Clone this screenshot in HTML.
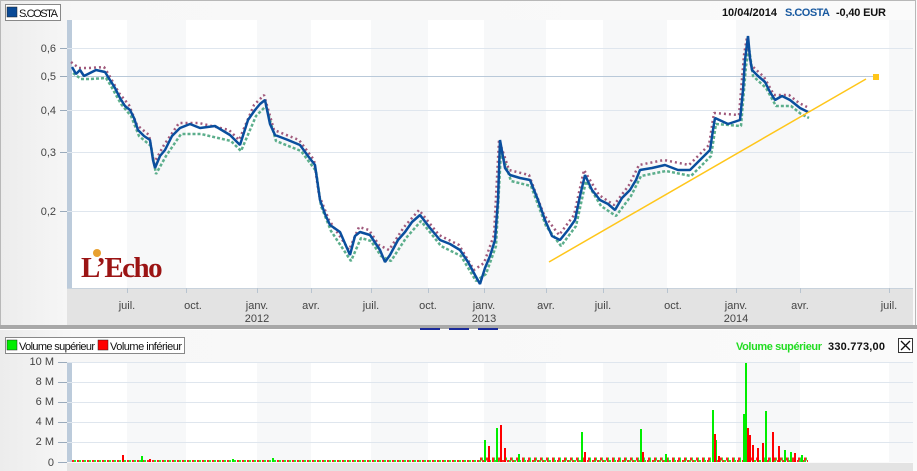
<!DOCTYPE html>
<html><head><meta charset="utf-8"><style>
body{margin:0;width:917px;height:471px;overflow:hidden;background:#fff}
svg{display:block;font-family:"Liberation Sans",sans-serif}
</style></head><body>
<svg width="917" height="471" viewBox="0 0 917 471" xmlns="http://www.w3.org/2000/svg">
<defs>
<linearGradient id="bg" x1="0" y1="0" x2="1" y2="0"><stop offset="0" stop-color="#ececec"/><stop offset="0.08" stop-color="#f7f7f7"/><stop offset="1" stop-color="#fafafa"/></linearGradient>
</defs>
<rect x="0" y="0" width="917" height="326" fill="url(#bg)"/>
<rect x="0.5" y="0.5" width="915" height="325" fill="none" stroke="#b8b8b8"/>
<rect x="71" y="20" width="842" height="268" fill="#fff"/>
<g fill="#f7f8f9">
<rect x="127" y="20" width="59" height="268"/><rect x="257" y="20" width="54" height="268"/>
<rect x="371" y="20" width="57" height="268"/><rect x="484" y="20" width="62" height="268"/>
<rect x="603" y="20" width="64" height="268"/><rect x="736" y="20" width="64" height="268"/>
<rect x="889" y="20" width="24" height="268"/>
</g>
<rect x="67" y="20" width="5" height="268" fill="#bccbdb"/>
<g stroke="#dfe6ee" stroke-width="1">
<line x1="67" y1="48.5" x2="913" y2="48.5"/><line x1="67" y1="110.5" x2="913" y2="110.5"/>
<line x1="67" y1="152.5" x2="913" y2="152.5"/><line x1="67" y1="211.5" x2="913" y2="211.5"/>
</g>
<line x1="67" y1="76.5" x2="876" y2="76.5" stroke="#b9c9d9"/>
<g font-size="11" fill="#444" text-anchor="end">
<text x="56" y="52">0,6</text><text x="56" y="80">0,5</text><text x="56" y="114">0,4</text><text x="56" y="156">0,3</text><text x="56" y="215">0,2</text>
</g>
<g stroke="#9aaabb"><line x1="60" y1="48.5" x2="67" y2="48.5"/><line x1="60" y1="76.5" x2="67" y2="76.5"/><line x1="60" y1="110.5" x2="67" y2="110.5"/><line x1="60" y1="152.5" x2="67" y2="152.5"/><line x1="60" y1="211.5" x2="67" y2="211.5"/></g>
<g fill="none" stroke-linejoin="bevel">
<polyline stroke="#5cae8c" stroke-width="2.5" stroke-dasharray="3 2" transform="translate(1,6)" points="72,67 80,73 90,73 105,72 110,80 120,98 130,110 138,130 150,140 155,168 165,150 180,128 200,128 230,135 240,145 255,110 265,100 275,135 300,145 315,165 320,200 330,225 350,255 360,232 370,235 380,250 390,255 405,232 420,215 440,240 460,250 475,275 485,268 495,240 500,145 510,175 530,180 545,220 560,240 575,220 585,175 600,200 615,210 630,190 640,170 665,165 690,170 710,150 715,118 740,120 745,60 748,42 752,70 765,82 775,100 790,100 800,108 808,112"/>
<polyline stroke="#a05a7c" stroke-width="2.5" stroke-dasharray="2 3" transform="translate(-1,-5)" points="72,67 80,73 90,73 105,72 110,80 120,98 130,110 138,130 150,140 155,168 165,150 180,128 200,128 230,135 240,145 255,110 265,100 275,135 300,145 315,165 320,200 330,225 350,255 360,232 370,235 380,250 390,255 405,232 420,215 440,240 460,250 475,275 485,268 495,240 500,145 510,175 530,180 545,220 560,240 575,220 585,175 600,200 615,210 630,190 640,170 665,165 690,170 710,150 715,118 740,120 745,60 748,42 752,70 765,82 775,100 790,100 800,108 808,112"/>
<polyline stroke="#0a4f9e" stroke-width="2.5" points="72,67 76,74 80,70 84,76 90,73 96,70 105,72 110,80 115,88 120,98 125,106 130,110 134,118 138,130 144,136 150,140 153,160 155,168 160,156 165,150 172,136 180,128 190,124 200,128 215,126 230,135 240,145 248,120 255,110 260,104 265,100 270,124 275,135 288,140 300,145 308,156 315,165 320,200 325,214 330,225 340,232 350,255 355,236 360,232 370,235 380,250 385,262 390,255 398,240 405,232 412,222 420,215 430,228 440,240 450,244 460,250 468,262 475,275 480,284 485,268 490,256 495,240 498,200 500,140 505,168 510,175 520,178 530,180 538,200 545,220 552,236 560,240 568,230 575,220 580,196 585,175 592,190 600,200 608,204 615,210 622,198 630,190 636,180 640,170 652,168 665,165 678,170 690,170 700,160 710,150 713,130 715,118 728,124 740,120 743,90 745,60 748,36 750,58 752,70 758,76 765,82 770,92 775,100 782,96 790,100 795,104 800,108 808,112"/>
</g>
<line x1="549" y1="262" x2="866" y2="79" stroke="#ffc61a" stroke-width="1.5"/>
<rect x="873" y="74" width="6" height="6" fill="#ffc61a"/>
<text x="81" y="277" style="font-family:'Liberation Serif',serif;font-weight:bold;font-size:29px" fill="#9b1414" letter-spacing="-1.5">L’Echo</text>
<circle cx="97" cy="253" r="4" fill="#e8a030"/>
<rect x="67" y="288" width="846" height="37" fill="#e3e3e3"/>
<line x1="67" y1="288.5" x2="913" y2="288.5" stroke="#c8d2dc"/>
<g stroke="#b8c4d0"><line x1="127.5" y1="288" x2="127.5" y2="293"/><line x1="186.5" y1="288" x2="186.5" y2="293"/><line x1="257.5" y1="288" x2="257.5" y2="293"/><line x1="311.5" y1="288" x2="311.5" y2="293"/><line x1="371.5" y1="288" x2="371.5" y2="293"/><line x1="428.5" y1="288" x2="428.5" y2="293"/><line x1="484.5" y1="288" x2="484.5" y2="293"/><line x1="546.5" y1="288" x2="546.5" y2="293"/><line x1="603.5" y1="288" x2="603.5" y2="293"/><line x1="667.5" y1="288" x2="667.5" y2="293"/><line x1="736.5" y1="288" x2="736.5" y2="293"/><line x1="800.5" y1="288" x2="800.5" y2="293"/><line x1="889.5" y1="288" x2="889.5" y2="293"/></g>
<g font-size="11" fill="#444" text-anchor="middle">
<text x="127" y="309">juil.</text><text x="193" y="309">oct.</text><text x="257" y="309">janv.</text><text x="311" y="309">avr.</text><text x="371" y="309">juil.</text><text x="428" y="309">oct.</text><text x="484" y="309">janv.</text><text x="546" y="309">avr.</text><text x="603" y="309">juil.</text><text x="673" y="309">oct.</text><text x="736" y="309">janv.</text><text x="800" y="309">avr.</text><text x="889" y="309">juil.</text>
<text x="257" y="322">2012</text><text x="484" y="322">2013</text><text x="736" y="322">2014</text>
</g>
<rect x="0" y="325" width="917" height="4" fill="#a8a8a8"/>
<g fill="#1a2a9a"><rect x="420" y="328" width="20" height="2"/><rect x="449" y="328" width="20" height="2"/><rect x="478" y="328" width="20" height="2"/></g>
<rect x="5.5" y="4.5" width="55" height="16" fill="#fff" stroke="#888"/>
<rect x="7" y="7" width="10" height="10" fill="#0a4a96" stroke="#222" stroke-width="0.5"/>
<text x="19" y="17" font-size="11" fill="#111" textLength="39">S.COSTA</text>
<text x="777" y="16" font-size="11" font-weight="bold" fill="#111" text-anchor="end">10/04/2014</text>
<text x="785" y="16" font-size="11" font-weight="bold" fill="#1a5aa0" textLength="45">S.COSTA</text>
<text x="836" y="16" font-size="11" font-weight="bold" fill="#111" textLength="50">-0,40 EUR</text>
<rect x="0" y="330" width="917" height="141" fill="url(#bg)"/>
<rect x="71" y="362" width="842" height="100" fill="#fff"/>
<g fill="#f7f8f9">
<rect x="127" y="362" width="59" height="100"/><rect x="257" y="362" width="54" height="100"/>
<rect x="371" y="362" width="57" height="100"/><rect x="484" y="362" width="62" height="100"/>
<rect x="603" y="362" width="64" height="100"/><rect x="736" y="362" width="64" height="100"/>
<rect x="889" y="362" width="24" height="100"/>
</g>
<rect x="67" y="362" width="5" height="100" fill="#bccbdb"/>
<g stroke="#dfe6ee"><line x1="67" y1="362.5" x2="913" y2="362.5"/><line x1="67" y1="382.5" x2="913" y2="382.5"/><line x1="67" y1="402.5" x2="913" y2="402.5"/><line x1="67" y1="422.5" x2="913" y2="422.5"/><line x1="67" y1="442.5" x2="913" y2="442.5"/></g>
<g font-size="11" fill="#444" text-anchor="end">
<text x="54" y="365">10 M</text><text x="54" y="385">8 M</text><text x="54" y="405">6 M</text><text x="54" y="425">4 M</text><text x="54" y="445">2 M</text><text x="54" y="466">0</text>
</g>
<g stroke="#9aaabb"><line x1="58" y1="362.5" x2="67" y2="362.5"/><line x1="58" y1="382.5" x2="67" y2="382.5"/><line x1="58" y1="402.5" x2="67" y2="402.5"/><line x1="58" y1="422.5" x2="67" y2="422.5"/><line x1="58" y1="442.5" x2="67" y2="442.5"/><line x1="58" y1="462.5" x2="67" y2="462.5"/></g>
<line x1="72" y1="461" x2="808" y2="461" stroke="#ff2020" stroke-width="2" stroke-dasharray="3 2"/>
<line x1="74" y1="461" x2="808" y2="461" stroke="#22ee22" stroke-width="2" stroke-dasharray="2 3"/>
<line x1="480" y1="459" x2="808" y2="459" stroke="#ff2020" stroke-width="3" stroke-dasharray="2 4"/>
<line x1="482" y1="459" x2="808" y2="459" stroke="#22ee22" stroke-width="3" stroke-dasharray="1 5"/>
<g fill="#00ee00">
<rect x="141" y="456" width="2" height="6"/><rect x="232" y="459" width="2" height="3"/><rect x="272" y="458" width="2" height="4"/>
<rect x="484" y="440" width="2" height="22"/><rect x="496" y="428" width="2" height="34"/><rect x="518" y="454" width="2" height="8"/>
<rect x="581" y="432" width="2" height="30"/><rect x="640" y="429" width="2" height="33"/><rect x="665" y="454" width="2" height="8"/>
<rect x="712" y="410" width="2" height="52"/><rect x="715" y="440" width="2" height="22"/><rect x="745" y="363" width="2" height="99"/>
<rect x="743" y="414" width="2" height="48"/><rect x="765" y="411" width="2" height="51"/><rect x="784" y="450" width="2" height="12"/><rect x="790" y="452" width="2" height="10"/><rect x="801" y="455" width="2" height="7"/>
</g>
<g fill="#ff0000">
<rect x="122" y="455" width="2" height="7"/><rect x="149" y="459" width="2" height="3"/>
<rect x="488" y="446" width="2" height="16"/><rect x="500" y="425" width="2" height="37"/><rect x="504" y="448" width="2" height="14"/>
<rect x="584" y="452" width="2" height="10"/><rect x="642" y="452" width="2" height="10"/>
<rect x="714" y="434" width="2" height="28"/><rect x="718" y="456" width="2" height="6"/>
<rect x="747" y="428" width="2" height="34"/><rect x="749" y="435" width="2" height="27"/><rect x="752" y="445" width="2" height="17"/><rect x="757" y="448" width="2" height="14"/><rect x="762" y="443" width="2" height="19"/><rect x="772" y="432" width="2" height="30"/><rect x="778" y="446" width="2" height="16"/><rect x="794" y="453" width="2" height="9"/>
</g>
<rect x="67" y="463" width="846" height="8" fill="#e3e3e3"/>
<rect x="5.5" y="337.5" width="179" height="16" fill="#fff" stroke="#888"/>
<rect x="7" y="340" width="10" height="10" fill="#00ee00" stroke="#222" stroke-width="0.5"/>
<text x="19" y="350" font-size="11" fill="#111" textLength="76">Volume supérieur</text>
<rect x="98" y="340" width="10" height="10" fill="#ff0000" stroke="#222" stroke-width="0.5"/>
<text x="110" y="350" font-size="11" fill="#111" textLength="72">Volume inférieur</text>
<text x="736" y="350" font-size="11" font-weight="bold" fill="#22dd22" textLength="86">Volume supérieur</text>
<text x="828" y="350" font-size="11" font-weight="bold" fill="#111" textLength="57">330.773,00</text>
<rect x="898.5" y="338.5" width="14" height="14" fill="#fff" stroke="#333"/>
<path d="M901 341L910 350M910 341L901 350" stroke="#111" stroke-width="1.3"/>
</svg>
</body></html>
